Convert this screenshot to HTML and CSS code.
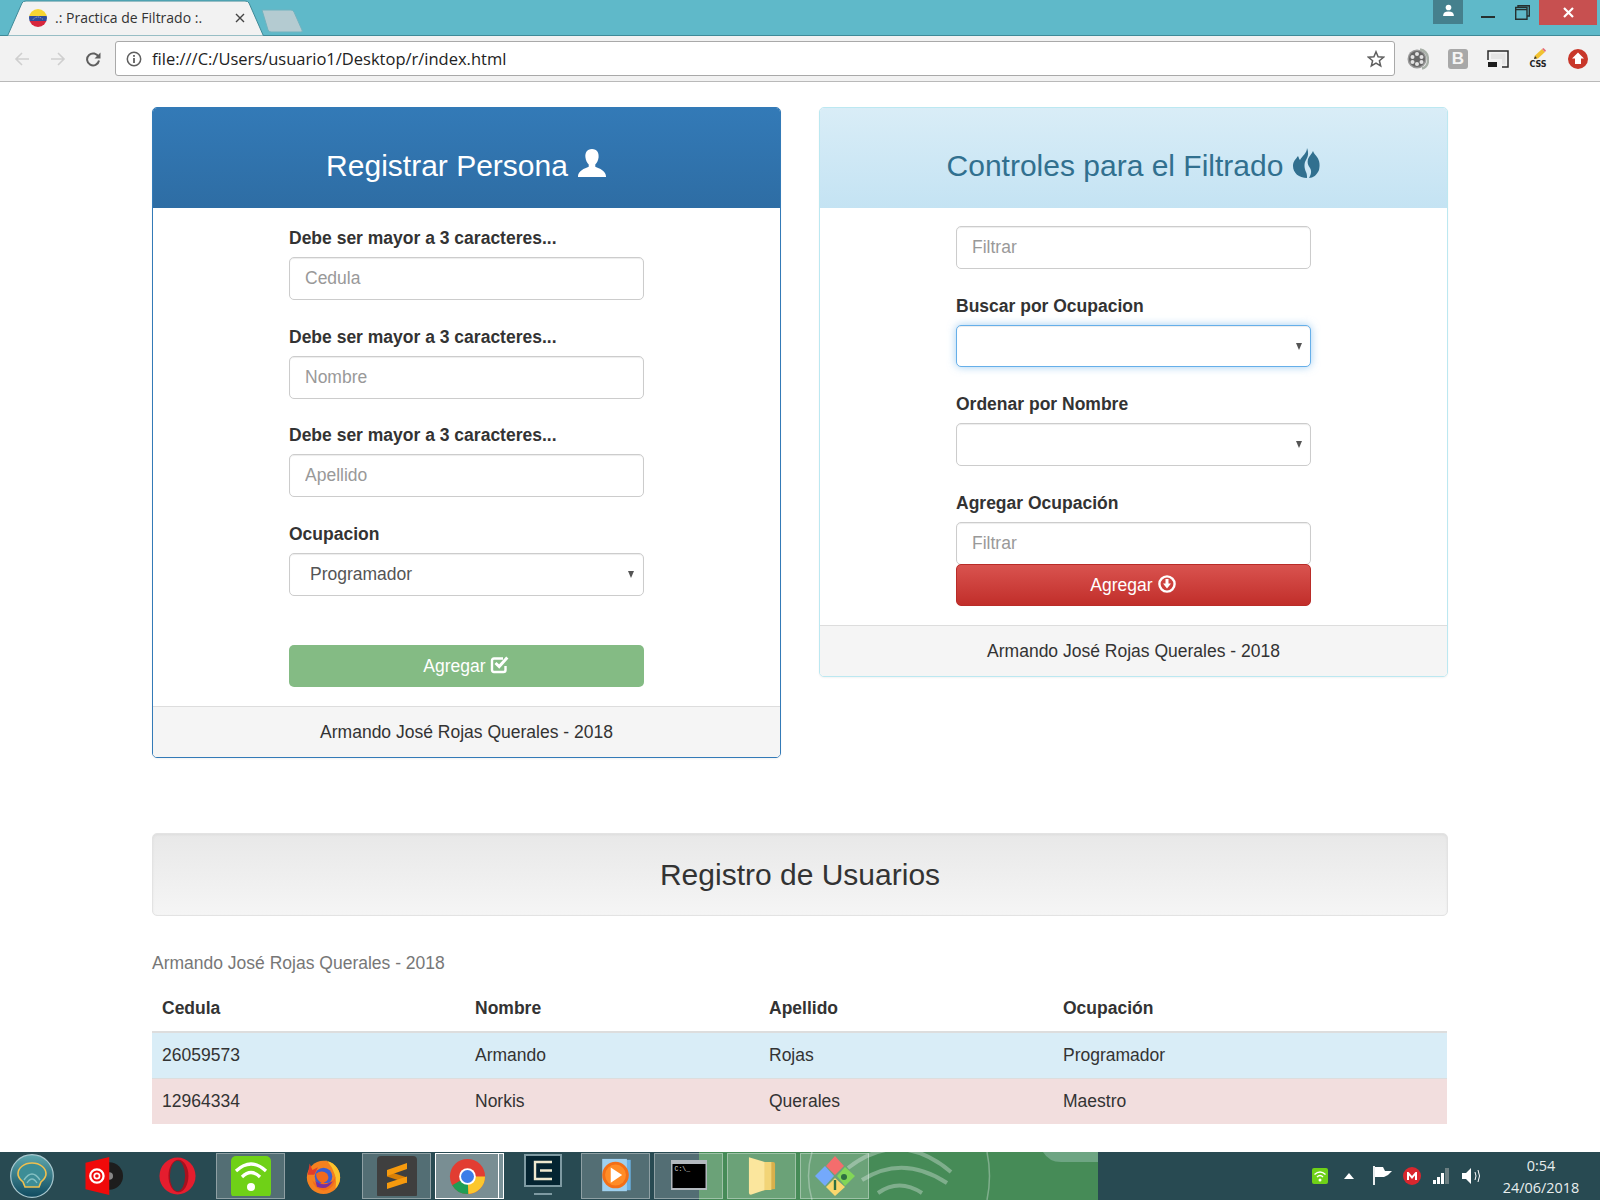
FILE: index.html
```html
<!DOCTYPE html>
<html lang="es">
<head>
<meta charset="utf-8">
<title>.: Practica de Filtrado :.</title>
<link rel="stylesheet" href="styles.css">
</head>
<body>
<header class="tabbar">
  <div class="tab">
    <svg class="tab-shape" viewBox="0 0 257 36" preserveAspectRatio="none"><path d="M0.5 36 L15 3 Q16 1 19 1 L238 1 Q241 1 242 3 L256.5 36 Z" fill="#f2f2f2" stroke="#3f8a98"/></svg>
    <svg class="favicon" viewBox="0 0 18 18"><defs><clipPath id="flagclip"><circle cx="9" cy="9" r="9"/></clipPath></defs><g clip-path="url(#flagclip)"><rect width="18" height="7" fill="#f6d532"/><rect y="7" width="18" height="5" fill="#2e4d9b"/><rect y="12" width="18" height="6" fill="#d7263d"/></g><path d="M4 10.5 Q9 5.5 14 10.5" fill="none" stroke="#cfd8ea" stroke-width=".8" stroke-dasharray="1 1"/></svg>
    <span class="tab-title">.: Practica de Filtrado :.</span>
    <svg class="tab-close" viewBox="0 0 10 10"><path d="M1 1 L9 9 M9 1 L1 9" stroke="#444" stroke-width="1.4"/></svg>
  </div>
  <svg class="new-tab" viewBox="0 0 42 24"><path d="M1 1 L30 1 Q32 1 33 3 L41 21 Q42 23 40 23 L10 23 Q8 23 7 21 Z" fill="#b4cbd1" stroke="#71b3bf"/></svg>
  <div class="window-controls">
    <div class="avatar"><svg viewBox="0 0 12 12"><circle cx="6" cy="3.2" r="2.6" fill="#fff"/><path d="M1 11 Q1 7 6 7 Q11 7 11 11 Z" fill="#fff"/></svg></div>
    <div class="win-btn"><svg viewBox="0 0 15 15" class="win-icon"><rect y="11" width="14" height="2" fill="#26302f"/></svg></div>
    <div class="win-btn"><svg viewBox="0 0 15 15" class="win-icon"><path d="M3 2.5 V0.7 H14.3 V11 H12.5 M0.7 2.5 H12 V14.3 H0.7 Z M0.7 4.6 H12" fill="none" stroke="#26302f" stroke-width="1.4"/></svg></div>
    <div class="win-close"><svg viewBox="0 0 11 11"><path d="M1 1 L10 10 M10 1 L1 10" stroke="#fff" stroke-width="2.2"/></svg></div>
  </div>
</header>

<nav class="toolbar">
  <svg class="nav-icon" viewBox="0 0 16 16"><path d="M15 8 H2 M8 2 L2 8 L8 14" fill="none" stroke="#cfcfcf" stroke-width="1.6"/></svg>
  <svg class="nav-icon" viewBox="0 0 16 16"><path d="M1 8 H14 M8 2 L14 8 L8 14" fill="none" stroke="#cfcfcf" stroke-width="1.6"/></svg>
  <svg class="nav-icon" viewBox="0 0 16 16"><path d="M13.6 6 A6 6 0 1 0 14 9.5" fill="none" stroke="#5f5f5f" stroke-width="2"/><path d="M15.5 1.5 V7.5 H9.5 Z" fill="#5f5f5f"/></svg>
  <div class="omnibox">
    <svg class="info-icon" viewBox="0 0 16 16"><circle cx="8" cy="8" r="6.7" fill="none" stroke="#5f5f5f" stroke-width="1.5"/><rect x="7.1" y="7" width="1.8" height="5" fill="#5f5f5f"/><rect x="7.1" y="4" width="1.8" height="1.8" fill="#5f5f5f"/></svg>
    <span class="url">file:///C:/Users/usuario1/Desktop/r/index.html</span>
    <svg class="star-icon" viewBox="0 0 18 18"><path d="M9 1.8 L11.1 6.8 L16.5 7.2 L12.4 10.7 L13.7 16 L9 13.2 L4.3 16 L5.6 10.7 L1.5 7.2 L6.9 6.8 Z" fill="none" stroke="#5f5f5f" stroke-width="1.5"/></svg>
  </div>
  <div class="extensions">
    <svg class="ext" viewBox="0 0 22 22"><circle cx="10" cy="11" r="9.5" fill="#9a9a9a"/><circle cx="10" cy="11" r="8" fill="#666"/><g fill="#e2e2e2"><circle cx="10" cy="6" r="2"/><circle cx="10" cy="16" r="2"/><circle cx="5.5" cy="9" r="2"/><circle cx="14.5" cy="9" r="2"/><circle cx="5.5" cy="14" r="2"/><circle cx="14.5" cy="14" r="2"/></g><path d="M13 1.5 Q21 3 21 12 Q21 19 15 20.5" fill="none" stroke="#a8b0a8" stroke-width="2.4"/></svg>
    <div class="ext ext-b">B</div>
    <svg class="ext" viewBox="0 0 22 22"><path d="M1 12 V3 H21 V19 H15" fill="none" stroke="#2b2b2b" stroke-width="1.5"/><path d="M4 5.5 H18.5 V16.5 H15 V11 H4 Z" fill="#e4e4e4"/><rect x="1" y="14" width="9" height="5" fill="#1d1d1d"/></svg>
    <div class="ext ext-css"><svg class="pencil" viewBox="0 0 14 12"><path d="M1 11 L2 7.5 L9 1 L12 4 L5 10.5 Z" fill="#f1c232"/><path d="M9 1 L10.5 0 L13 2.5 L12 4 Z" fill="#e56b7b"/><path d="M1 11 L2 8 L4 10.3 Z" fill="#333"/></svg><span class="css-text">CSS</span></div>
    <svg class="ext" viewBox="0 0 22 22"><circle cx="11" cy="11" r="10" fill="#c8372a"/><path d="M11 4.5 L17 10.5 H14 V16 H8 V10.5 H5 Z" fill="#fff"/></svg>
  </div>
</nav>

<main class="page">
  <div class="panels">
    <section class="panel panel-primary">
      <div class="panel-heading heading-primary">
        <h3 class="panel-title">Registrar Persona
          <svg class="title-icon" viewBox="0 0 32 32"><path d="M16 1 C10.5 1 8.5 5 9 10 C9.4 13.5 11 16 12.5 17.5 L12.5 20 C8 22 1 24 1 31 H31 C31 24 24 22 19.5 20 L19.5 17.5 C21 16 22.6 13.5 23 10 C23.5 5 21.5 1 16 1 Z" fill="#fff"/></svg>
        </h3>
      </div>
      <div class="panel-body">
        <form class="form">
          <div class="form-group"><label class="label" for="cedula">Debe ser mayor a 3 caracteres...</label><input class="control" id="cedula" placeholder="Cedula"></div>
          <div class="form-group"><label class="label" for="nombre">Debe ser mayor a 3 caracteres...</label><input class="control" id="nombre" placeholder="Nombre"></div>
          <div class="form-group"><label class="label" for="apellido">Debe ser mayor a 3 caracteres...</label><input class="control" id="apellido" placeholder="Apellido"></div>
          <div class="form-group form-group-last"><label class="label" for="ocupacion">Ocupacion</label><div class="select-wrap"><select class="control select" id="ocupacion"><option>Programador</option></select></div></div>
          <button class="btn btn-success" type="button">Agregar
            <svg class="btn-icon" viewBox="0 0 20 20"><path d="M15.5 11 V15 Q15.5 17 13.5 17 H4 Q2 17 2 15 V5.5 Q2 3.5 4 3.5 H13" fill="none" stroke="#fff" stroke-width="2.4"/><path d="M5.5 8 L9.2 11.5 L17.3 2.5" fill="none" stroke="#fff" stroke-width="3"/></svg>
          </button>
        </form>
      </div>
      <div class="panel-footer">Armando José Rojas Querales - 2018</div>
    </section>

    <section class="panel panel-info">
      <div class="panel-heading heading-info">
        <h3 class="panel-title panel-title-wide">Controles para el Filtrado
          <svg class="fire-icon" viewBox="0 0 27 30"><path d="M14 0 C16 5 15 9 13 12 C11 15 11 20 13 24 C14 26 14 28 14 30 C6 30 0 25 0 18 C0 13 3 11 5 8 C6 10 6 11 7 12 C9 8 14 5 14 0 Z M20 3 C21 6 23 7 24 9 C27 13 27 18 26 22 C24 27 20 30 16 30 C18 27 19 23 17 20 C15 17 14 15 15 11 C16 8 19 6 20 3 Z" fill="#31708f"/></svg>
        </h3>
      </div>
      <div class="panel-body">
        <form class="form">
          <div class="form-group"><input class="control" placeholder="Filtrar" aria-label="Filtrar"></div>
          <div class="form-group"><label class="label" for="buscar">Buscar por Ocupacion</label><div class="select-wrap"><select class="control select control-focus" id="buscar"><option></option></select></div></div>
          <div class="form-group"><label class="label" for="ordenar">Ordenar por Nombre</label><div class="select-wrap"><select class="control select" id="ordenar"><option></option></select></div></div>
          <div><label class="label" for="nueva">Agregar Ocupación</label><input class="control" id="nueva" placeholder="Filtrar"></div>
          <button class="btn btn-danger" type="button">Agregar
            <svg class="btn-icon" viewBox="0 0 20 20"><circle cx="10" cy="10" r="7.6" fill="none" stroke="#fff" stroke-width="2.4"/><path d="M8.5 5 H11.5 V9.5 H14 L10 14.5 L6 9.5 H8.5 Z" fill="#fff"/></svg>
          </button>
        </form>
      </div>
      <div class="panel-footer">Armando José Rojas Querales - 2018</div>
    </section>
  </div>

  <h2 class="section-title">Registro de Usuarios</h2>

  <table class="table">
    <caption class="caption">Armando José Rojas Querales - 2018</caption>
    <thead>
      <tr><th class="col-a">Cedula</th><th class="col-b">Nombre</th><th class="col-c">Apellido</th><th class="col-d">Ocupación</th></tr>
    </thead>
    <tbody>
      <tr class="row-info"><td>26059573</td><td>Armando</td><td>Rojas</td><td>Programador</td></tr>
      <tr class="row-danger"><td>12964334</td><td>Norkis</td><td>Querales</td><td>Maestro</td></tr>
    </tbody>
  </table>
</main>

<footer class="taskbar">
  <svg class="wallpaper" viewBox="0 0 399 48" preserveAspectRatio="none">
    <rect width="399" height="48" fill="#468b57"/>
    <g fill="none" stroke="#7fae8c" stroke-width="4">
      <path d="M113 0 Q106 24 113 48" stroke-width="1.5"/>
      <path d="M149 16 Q200 -24 252 20"/>
      <path d="M163 28 Q204 2 248 31"/>
      <path d="M179 41 Q200 26 223 41"/>
      <path d="M288 0 Q293 24 288 48" stroke-width="1.5"/>
    </g>
    <path d="M344 0 H399 V10 H362 Q350 10 344 0 Z" fill="#6ea583"/>
  </svg>
  <div class="start"><svg class="start-orb" viewBox="0 0 44 44"><defs><linearGradient id="orb" x1="0" y1="0" x2="0" y2="1"><stop offset="0" stop-color="#5fa7ad"/><stop offset="1" stop-color="#0f4a5f"/></linearGradient></defs><circle cx="22" cy="22" r="21.3" fill="url(#orb)" stroke="#a9c8cf" stroke-width="1.2"/><path d="M22 9 C14 9 8 14 8 20 C8 24 11 26 13 28 L15 33 H29 L31 28 C33 26 36 24 36 20 C36 14 30 9 22 9 Z" fill="#3d8d96" stroke="#f0c04f" stroke-width="1.6"/><g fill="none" stroke="#84c0c2" stroke-width="1.4"><path d="M14 26 Q22 14 30 26"/><path d="M17 29 Q22 21 27 29"/></g></svg></div>
  <div class="slot"><svg class="app app-39" viewBox="0 0 40 40"><circle cx="25" cy="20" r="14.5" fill="#1d1d1d"/><circle cx="25" cy="20" r="4" fill="#888"/><path d="M0 6 L25 0 V40 L0 34 Z" fill="#f00a0a"/><circle cx="12" cy="20" r="7" fill="none" stroke="#fff" stroke-width="2.4"/><circle cx="12" cy="20" r="2.8" fill="none" stroke="#fff" stroke-width="1.8"/></svg></div>
  <div class="slot"><svg class="app app-39" viewBox="0 0 40 40"><ellipse cx="20" cy="20" rx="19" ry="19.5" fill="#e51d2e"/><ellipse cx="21" cy="20" rx="10.5" ry="17" fill="#a8101d"/><ellipse cx="20" cy="20" rx="8" ry="16" fill="#284a52"/></svg></div>
  <div class="slot slot-on"><svg class="app app-40" viewBox="0 0 40 40"><rect width="40" height="42" rx="5" fill="#6fd117"/><g fill="none" stroke="#fff" stroke-width="3.2"><path d="M5 15 Q20 1 35 15"/><path d="M11 21 Q20 12 29 21"/></g><circle cx="20" cy="31" r="4" fill="#fff"/></svg></div>
  <div class="slot"><svg class="app app-37" viewBox="0 0 40 40"><circle cx="20" cy="21" r="18" fill="#f5811f"/><path d="M20 3 A18 18 0 0 1 38 21 A18 18 0 0 1 33 33 Q36 18 24 3 Z" fill="#fcc32c"/><circle cx="20" cy="20" r="9.5" fill="#3a5ed1"/><path d="M12 17 Q18 12 24 17 Q28 24 20 27 Q30 28 33 20 Q32 34 20 35 Q10 34 8 24 Q12 30 18 27 Q12 24 12 17 Z" fill="#f26a1c"/><path d="M11 24 Q18 32 30 25 Q24 36 13 31 Z" fill="#7a2f9e"/><path d="M5 6 L8 13 L14 10 L10 18 L3 18 Z" fill="#e23d2b"/></svg></div>
  <div class="slot slot-on"><svg class="app app-40" viewBox="0 0 40 40"><rect width="40" height="42" rx="4" fill="#3f3f3f"/><path d="M10 15 L30 21.5 V27 L10 20.5 Z" fill="#d87f06"/><path d="M10 14 L30 7 V13 L10 20 Z M10 27 L30 20.5 V26.5 L10 33 Z" fill="#f79a0e"/></svg></div>
  <div class="slot slot-active"><svg class="app app-37" viewBox="0 0 40 40"><circle cx="20" cy="20" r="19" fill="#e23d32"/><path d="M20 20 L3.5 29.5 A19 19 0 0 0 21 39 Z" fill="#1e9e55"/><path d="M20 20 L39 20 A19 19 0 0 1 21 39 Z" fill="#fbc72e"/><circle cx="20" cy="20" r="9" fill="#fff"/><circle cx="20" cy="20" r="7" fill="#3d7de8"/></svg></div>
  <div class="slot"><svg class="app app-38" viewBox="0 0 38 44"><rect x="1" y="1" width="36" height="31" fill="#042431" stroke="#7e9aa2" stroke-width="2"/><path d="M28 8 H11 V25 H28 M16 16.5 H28" fill="none" stroke="#eee9cf" stroke-width="2.4"/><rect x="10" y="39" width="18" height="2" fill="#7e9aa2"/></svg></div>
  <div class="slot slot-on"><svg class="app app-33" viewBox="0 0 34 40"><rect x="7" y="3" width="26" height="32" fill="#6cb1e3"/><rect x="3" y="2" width="26" height="34" fill="#9fd0ef"/><circle cx="17" cy="19" r="14" fill="#f36f17"/><circle cx="17" cy="19" r="11" fill="#ff8c27"/><path d="M12 11 L24 19 L12 27 Z" fill="#fff"/></svg></div>
  <div class="slot slot-on"><svg class="app app-36" viewBox="0 0 36 32"><rect width="36" height="30" fill="#b3b9bf"/><rect x="1.5" y="4" width="33" height="24" fill="#000"/><text class="cmd-text" x="3.5" y="11">C:\_</text></svg></div>
  <div class="slot slot-on"><svg class="app app-folder" viewBox="0 0 30 42"><path d="M7 6 H27 Q29 6 29 8 V35 L10 37 Z" fill="#d9b04c"/><path d="M1 1 L18 6 V36 L3 41 Q1 41 1 39 Z" fill="#fbe69d"/><path d="M18 6 L25 6 V36 L18 36 Z" fill="#f2d477"/></svg></div>
  <div class="slot slot-on"><svg class="app app-40" viewBox="0 0 40 40"><path d="M19 20 L10 10 L0 20 L10 30 Z" fill="#74a9fb"/><path d="M20 22 L11 31 L20 40 L30 31 Z" fill="#fad76d"/><path d="M22 20 L30 11 L40 20 L30 30 Z" fill="#82d657"/><path d="M20 19 L11 10 L20 0 L29 10 Z" fill="#f46d6d"/><circle cx="29" cy="21" r="3" fill="#2f7041"/><path d="M20 34 V24" stroke="#2f7041" stroke-width="2.4"/></svg></div>
  <div class="tray">
    <svg class="tray-wifi" viewBox="0 0 16 16"><rect width="16" height="16" rx="2" fill="#6fd117"/><g fill="none" stroke="#fff" stroke-width="1.4"><path d="M2.5 6.5 Q8 1.5 13.5 6.5"/><path d="M5 9 Q8 6 11 9"/></g><circle cx="8" cy="12" r="1.5" fill="#fff"/></svg>
    <svg class="tray-caret" viewBox="0 0 10 6"><path d="M0 6 L5 0 L10 6 Z" fill="#fff"/></svg>
    <svg class="tray-flag" viewBox="0 0 19 20"><path d="M1 0 V19" stroke="#fff" stroke-width="1.8"/><path d="M2 1 H10 L12 5 H19 L15 9 L11 11 H2 Z" fill="#fff"/></svg>
    <svg class="tray-mega" viewBox="0 0 18 18"><circle cx="9" cy="9" r="9" fill="#d9272e"/><path d="M4 13 V5 H5.5 L9 9 L12.5 5 H14 V13 H12 V8.5 L9 12 L6 8.5 V13 Z" fill="#fff"/></svg>
    <svg class="tray-signal" viewBox="0 0 16 16"><rect x="0" y="12" width="3" height="4" fill="#fff"/><rect x="4" y="9" width="3" height="7" fill="#fff"/><rect x="8" y="5" width="3" height="11" fill="#fff"/><rect x="12" y="0" width="4" height="16" fill="#6c7f82"/></svg>
    <svg class="tray-sound" viewBox="0 0 20 18"><path d="M0 6 H4 L9 1 V17 L4 12 H0 Z" fill="#fff"/><path d="M13 5 Q15 9 13 13 M16 3 Q19 9 16 15" fill="none" stroke="#fff" stroke-width="1"/></svg>
    <div class="clock"><span>0:54</span><span>24/06/2018</span></div>
  </div>
</footer>
</body>
</html>
```

FILE: styles.css
```css
* { box-sizing: border-box; }
html, body { margin: 0; height: 1200px; overflow: hidden; }
body {
  display: flex;
  flex-direction: column;
  width: 1600px;
  font-family: "Liberation Sans", Arial, sans-serif;
  font-size: 17.5px;
  line-height: 25px;
  color: #333;
  background: #fff;
}

/* browser chrome */
.tabbar {
  flex: none;
  display: flex;
  height: 36px;
  background: #5fb9c9;
  box-shadow: inset 0 -1px 0 #3f8a98;
}
.tab {
  position: relative;
  display: flex;
  align-items: center;
  width: 257px;
  height: 36px;
  margin-left: 7px;
  padding: 0 19px 0 22px;
}
.tab-shape { position: absolute; inset: 0; width: 100%; height: 100%; }
.favicon { position: relative; width: 18px; height: 18px; flex: none; }
.tab-title {
  position: relative;
  margin-left: 8px;
  font-family: "Open Sans", sans-serif;
  font-size: 14px;
  line-height: 18px;
  color: #333;
  white-space: nowrap;
}
.tab-close { position: relative; width: 10px; height: 10px; margin-left: auto; flex: none; }
.new-tab { width: 42px; height: 24px; margin: 9px 0 0 -3px; flex: none; }
.window-controls { display: flex; margin-left: auto; align-items: flex-start; padding-right: 3px; }
.avatar {
  display: flex;
  align-items: center;
  justify-content: center;
  width: 30px;
  height: 24px;
  margin-right: 8px;
  background: #45808d;
}
.avatar svg { width: 13px; height: 13px; margin-bottom: 4px; }
.win-btn { display: flex; align-items: center; justify-content: center; width: 34px; height: 24px; }
.win-icon { width: 15px; height: 15px; }
.win-close {
  display: flex;
  align-items: center;
  justify-content: center;
  width: 58px;
  height: 25px;
  background: #c75050;
}
.win-close svg { width: 11px; height: 11px; }

.toolbar {
  flex: none;
  display: flex;
  align-items: center;
  height: 46px;
  padding-left: 14px;
  background: #f2f2f2;
  border-bottom: 1px solid #b9b9b9;
}
.nav-icon { width: 16px; height: 16px; margin-right: 20px; flex: none; }
.nav-icon:nth-child(2) { margin-right: 19px; }
.nav-icon:nth-child(3) { margin-right: 14px; }
.omnibox {
  display: flex;
  align-items: center;
  width: 1280px;
  height: 35px;
  padding: 0 9px 0 10px;
  background: #fff;
  border: 1px solid #a9a9a9;
  border-radius: 3px;
  flex: none;
}
.info-icon { width: 16px; height: 16px; flex: none; }
.url {
  margin-left: 10px;
  font-family: "Open Sans", sans-serif;
  font-size: 16.5px;
  line-height: 22px;
  color: #222;
  white-space: nowrap;
}
.star-icon { width: 18px; height: 18px; margin-left: auto; flex: none; }
.extensions { display: flex; align-items: center; gap: 18px; margin-left: 12px; }
.ext { width: 22px; height: 22px; flex: none; }
.ext-b {
  display: flex;
  align-items: center;
  justify-content: center;
  width: 20px;
  height: 20px;
  margin: 0 1px;
  background: #a8a8a8;
  border-radius: 3px;
  color: #f4f4f4;
  font-size: 17px;
  font-weight: 700;
  line-height: 20px;
}
.ext-css { display: flex; flex-direction: column; align-items: center; }
.pencil { width: 14px; height: 12px; margin-left: 3px; flex: none; }
.css-text {
  font-family: "DejaVu Sans", sans-serif;
  font-size: 8px;
  font-weight: 700;
  line-height: 9px;
  color: #222;
}

/* page */
.page { flex: 1; min-height: 0; padding: 25px 152px 0; }
.panels { display: flex; align-items: flex-start; gap: 38px; }
.panel {
  width: 629px;
  background: #fff;
  border: 1px solid transparent;
  border-radius: 5px;
  box-shadow: 0 1px 2px rgba(0, 0, 0, .05);
  overflow: hidden;
}
.panel-primary { border-color: #337ab7; }
.panel-info { border-color: #bce8f1; }
.panel-heading {
  display: flex;
  align-items: center;
  justify-content: center;
  height: 100px;
}
.heading-primary { background: linear-gradient(#337ab7, #2e6da4); color: #fff; }
.heading-info { background: linear-gradient(#d9edf7, #c4e3f3); color: #31708f; }
.panel-title {
  display: flex;
  align-items: center;
  gap: 9px;
  margin: 14px 0 0;
  font-size: 30px;
  font-weight: 400;
  line-height: 33px;
}
.panel-title-wide { gap: 10px; }
.title-icon { width: 30px; height: 30px; margin-top: -5px; flex: none; }
.fire-icon { width: 27px; height: 30px; margin-top: -5px; flex: none; }
.panel-body { padding: 18px 0; }
.panel-primary .panel-body { padding: 17.75px 0 19px; }
.form { width: 355px; margin: 0 auto; }
.form-group { margin-bottom: 25px; }
.panel-primary .form-group:nth-child(1) { margin-bottom: 25.25px; }
.panel-primary .form-group:nth-child(2) { margin-bottom: 24.5px; }
.panel-primary .form-group-last { margin-bottom: 49.5px; }
.panel-info .form-group:nth-child(2) { margin-bottom: 24.75px; }
.panel-info .form-group:nth-child(3) { margin-bottom: 25.25px; }
.label { display: block; margin-bottom: 6.25px; font-weight: 700; line-height: 25px; }
.control {
  display: block;
  width: 100%;
  height: 42.5px;
  padding: 7.5px 15px;
  font-family: inherit;
  font-size: 17.5px;
  line-height: 25px;
  color: #555;
  background: #fff;
  border: 1px solid #ccc;
  border-radius: 5px;
  box-shadow: inset 0 1px 1px rgba(0, 0, 0, .075);
}
.control::placeholder { color: #999; opacity: 1; }
.select { appearance: none; padding-left: 20px; }
.select-wrap { position: relative; }
.select-wrap::after {
  content: "";
  position: absolute;
  top: 18px;
  right: 9px;
  border-top: 7px solid #555;
  border-left: 3.5px solid transparent;
  border-right: 3.5px solid transparent;
}
.panel-primary .select-wrap::after { right: 10px; }
.control-focus {
  border-color: #66afe9;
  box-shadow: inset 0 1px 1px rgba(0, 0, 0, .075), 0 0 8px rgba(102, 175, 233, .6);
}
.btn {
  display: flex;
  align-items: center;
  justify-content: center;
  gap: 4px;
  width: 100%;
  height: 42px;
  padding: 0;
  font-family: inherit;
  font-size: 17.5px;
  line-height: 25px;
  color: #fff;
  border: 1px solid transparent;
  border-radius: 5px;
}
.btn-success { background: #84bb84; }
.btn-danger {
  position: relative;
  margin: -.75px 0 .75px;
  background: linear-gradient(#d9534f, #c12e2a);
  border-color: #b92c28;
}
.btn-icon { width: 20px; height: 20px; margin-top: -3px; flex: none; }
.panel-footer {
  height: 51px;
  padding: 13.5px 18px 0;
  text-align: center;
  background: #f5f5f5;
  border-top: 1px solid #ddd;
}
.panel-primary .panel-footer { padding-top: 12.5px; }

.section-title {
  height: 83px;
  margin: 75px 0 0;
  font-size: 30px;
  font-weight: 400;
  line-height: 81px;
  text-align: center;
  background: linear-gradient(#e8e8e8, #f5f5f5);
  border: 1px solid #e3e3e3;
  border-radius: 5px;
  box-shadow: inset 0 1px 3px rgba(0, 0, 0, .05);
}
.table { width: calc(100% - 1px); margin-top: 0; border-collapse: collapse; table-layout: fixed; }
.caption { padding: 35px 0 10px; text-align: left; color: #777; }
.table th, .table td { padding: 10px; text-align: left; line-height: 25px; }
.table th { font-weight: 700; border-bottom: 2px solid #ddd; }
.table td { border-top: 1px solid #ddd; }
.col-a { width: 313px; }
.col-b { width: 294px; }
.col-c { width: 294px; }
.col-d { width: 394px; }
.row-info td { background: #d9edf7; border-top: 0; }
.row-danger td { background: #f2dede; }

/* taskbar */
.taskbar {
  position: relative;
  flex: none;
  display: flex;
  gap: 4px;
  height: 48px;
  background: #284a52;
}
.wallpaper { position: absolute; left: 699px; top: 0; width: 399px; height: 48px; }
.start { position: relative; display: flex; align-items: center; width: 66px; padding-left: 10px; }
.start-orb { width: 44px; height: 44px; }
.slot {
  position: relative;
  display: flex;
  align-items: center;
  justify-content: center;
  width: 69px;
  height: 46px;
  margin-top: 1px;
  flex: none;
  border: 1px solid transparent;
}
.slot-on { background: rgba(255, 255, 255, .2); border-color: rgba(255, 255, 255, .35); }
.slot-active {
  background: rgba(255, 255, 255, .38);
  border: 1px solid #fff;
  width: 64px;
  margin-right: 5px;
}
.slot-active::after {
  content: "";
  position: absolute;
  top: -1px;
  bottom: -1px;
  right: -6px;
  width: 4px;
  background: #7a9298;
  border: 1px solid #fff;
  border-left-width: 0;
}
.app { flex: none; }
.app-33 { width: 33px; height: 38px; }
.app-36 { width: 36px; height: 32px; }
.app-37 { width: 37px; height: 37px; }
.app-38 { width: 38px; height: 44px; }
.app-39 { width: 39px; height: 38px; }
.app-40 { width: 40px; height: 40px; }
.app-folder { width: 28px; height: 40px; }
.cmd-text { font-family: "Liberation Mono", monospace; font-size: 6.5px; fill: #ddd; }
.tray {
  position: relative;
  display: flex;
  align-items: center;
  margin-left: auto;
  padding-right: 21px;
}
.tray-wifi { width: 16px; height: 16px; }
.tray-caret { width: 10px; height: 6px; margin-left: 16px; }
.tray-flag { width: 19px; height: 20px; margin-left: 19px; }
.tray-mega { width: 18px; height: 18px; margin-left: 11px; }
.tray-signal { width: 16px; height: 16px; margin-left: 12px; }
.tray-sound { width: 20px; height: 18px; margin-left: 13px; }
.clock {
  display: flex;
  flex-direction: column;
  align-items: center;
  width: 76px;
  margin-left: 21px;
  padding-top: 1px;
  font-family: "Open Sans", sans-serif;
  font-size: 14.4px;
  line-height: 22px;
  color: #e8eeee;
  white-space: nowrap;
}
```
